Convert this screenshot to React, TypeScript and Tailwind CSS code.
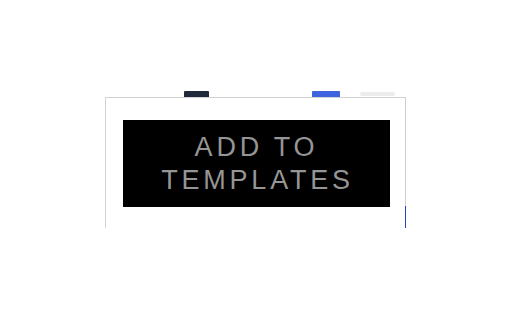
export default function App() {
  return (
    <div className="h-[320px] w-[512px] bg-white pl-[105px] pt-[91px]">
      <div className="w-[301px]">
        <div className="flex h-[6px] items-start">
          <div className="ml-[79px] h-[6px] w-[25px] rounded-t-[1px] bg-[#1e2a3a]" />
          <div className="ml-[103px] h-[6px] w-[28px] rounded-t-[1px] bg-[#3f63de]" />
          <div className="ml-[20px] mt-[1px] h-[4px] w-[35px] rounded-full bg-[#ececec]" />
        </div>
        <div className="flex h-[131px]">
          <div className="flex-1 border-l border-t border-[#d2d2d2] pl-[17px] pt-[22px]">
            <div
              className="flex h-[87px] w-[267px] flex-col items-center justify-center bg-black text-center text-[27px] leading-[33px] tracking-[3.8px] text-[#959595]"
              style={{ fontFamily: '"Liberation Sans", Arial, sans-serif' }}
            >
              <span>ADD TO</span>
              <span className="pl-[2px]">TEMPLATES</span>
            </div>
          </div>
          <div className="flex w-px flex-col border-t border-[#d2d2d2]">
            <div className="flex-1 bg-[#cfcfcf]" />
            <div className="h-[22px] bg-[#2343c4]" />
          </div>
        </div>
      </div>
    </div>
  );
}
